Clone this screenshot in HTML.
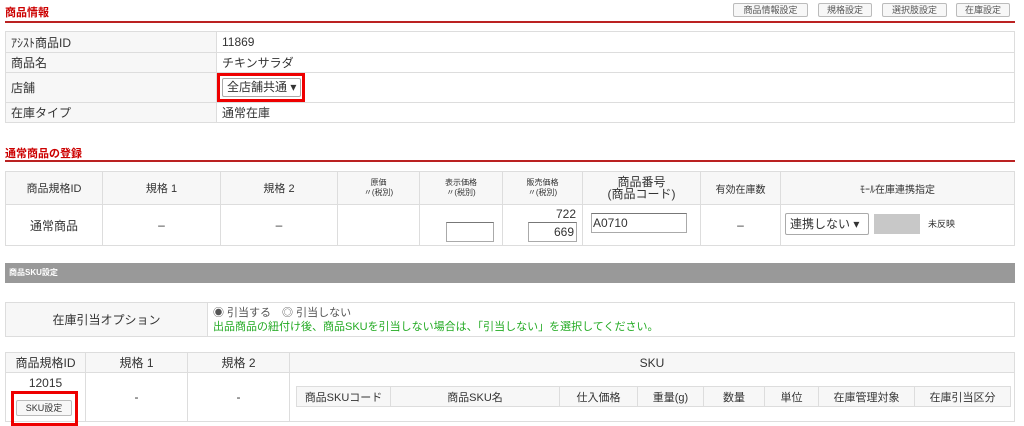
<!DOCTYPE html><html><head><meta charset="utf-8"><style>
*{box-sizing:border-box;margin:0;padding:0}
body{width:1024px;height:426px;background:#fff;font-family:"Liberation Sans","Noto Sans CJK JP",sans-serif;font-size:12px;color:#333;position:relative;overflow:hidden}
.a{position:absolute}
.t{color:#c00;font-weight:bold;font-size:11px}
.rl{position:absolute;left:5px;width:1010px;height:2px;background:#b22}
.btn{position:absolute;top:3px;height:14px;border:1px solid #bbb;border-radius:2px;background:#f7f7f7;font-size:9px;color:#555;text-align:center;line-height:12px}
.c{position:absolute;border:1px solid #ddd;display:flex;align-items:center;justify-content:center;text-align:center}
.l{justify-content:flex-start;padding-left:5px;text-align:left}
.h{background:#f7f7f7}
.s{font-size:8px;line-height:10px}
</style></head><body>
<div class="a t" style="left:5px;top:4px">商品情報</div>
<div class="rl" style="top:21px"></div>
<div class="btn" style="left:733px;width:75px">商品情報設定</div>
<div class="btn" style="left:818px;width:54px">規格設定</div>
<div class="btn" style="left:882px;width:65px">選択肢設定</div>
<div class="btn" style="left:956px;width:54px">在庫設定</div>

<div class="c l h" style="left:5px;top:31px;width:212px;height:22px">ｱｼｽﾄ商品ID</div>
<div class="c l" style="left:216px;top:31px;width:799px;height:22px">11869</div>
<div class="c l h" style="left:5px;top:52px;width:212px;height:21px">商品名</div>
<div class="c l" style="left:216px;top:52px;width:799px;height:21px">チキンサラダ</div>
<div class="c l h" style="left:5px;top:72px;width:212px;height:31px">店舗</div>
<div class="c l" style="left:216px;top:72px;width:799px;height:31px"></div>
<div class="c l h" style="left:5px;top:102px;width:212px;height:21px">在庫タイプ</div>
<div class="c l" style="left:216px;top:102px;width:799px;height:21px">通常在庫</div>
<div class="a" style="left:217px;top:73px;width:88px;height:29px;border:3px solid #e00"></div>
<div class="a" style="left:222px;top:78px;width:79px;height:19px;border:1px solid #aaa;border-radius:2px;font-size:12px;line-height:17px;padding-left:4px">全店舗共通 ▾</div>

<div class="a t" style="left:5px;top:145px">通常商品の登録</div>
<div class="rl" style="top:160px"></div>
<div class="c h" style="left:5px;top:171px;width:98px;height:34px;font-size:11px">商品規格ID</div>
<div class="c h" style="left:102px;top:171px;width:119px;height:34px;font-size:11px">規格 1</div>
<div class="c h" style="left:220px;top:171px;width:118px;height:34px;font-size:11px">規格 2</div>
<div class="c h s" style="left:337px;top:171px;width:83px;height:34px">原価<br>〃(税別)</div>
<div class="c h s" style="left:419px;top:171px;width:84px;height:34px">表示価格<br>〃(税別)</div>
<div class="c h s" style="left:502px;top:171px;width:81px;height:34px">販売価格<br>〃(税別)</div>
<div class="c h" style="left:582px;top:171px;width:119px;height:34px;font-size:12px;line-height:12px">商品番号<br>(商品コード)</div>
<div class="c h" style="left:700px;top:171px;width:81px;height:34px;font-size:10px">有効在庫数</div>
<div class="c h" style="left:780px;top:171px;width:235px;height:34px;font-size:10px">ﾓｰﾙ在庫連携指定</div>
<div class="c" style="left:5px;top:204px;width:98px;height:42px">通常商品</div>
<div class="c" style="left:102px;top:204px;width:119px;height:42px">–</div>
<div class="c" style="left:220px;top:204px;width:118px;height:42px">–</div>
<div class="c" style="left:337px;top:204px;width:83px;height:42px"></div>
<div class="c" style="left:419px;top:204px;width:84px;height:42px"></div>
<div class="c" style="left:502px;top:204px;width:81px;height:42px"></div>
<div class="c" style="left:582px;top:204px;width:119px;height:42px"></div>
<div class="c" style="left:700px;top:204px;width:81px;height:42px">–</div>
<div class="c" style="left:780px;top:204px;width:235px;height:42px"></div>
<div class="a" style="left:446px;top:222px;width:48px;height:20px;border:1px solid #aaa;border-top-color:#777"></div>
<div class="a" style="left:540px;top:207px;width:36px;text-align:right">722</div>
<div class="a" style="left:528px;top:222px;width:49px;height:20px;border:1px solid #aaa;border-top-color:#777;text-align:right;padding-right:2px;line-height:18px">669</div>
<div class="a" style="left:591px;top:213px;width:96px;height:20px;border:1px solid #aaa;border-top-color:#777;padding-left:1px;line-height:18px">A0710</div>
<div class="a" style="left:785px;top:213px;width:84px;height:22px;border:1px solid #aaa;border-radius:2px;line-height:20px;padding-left:4px">連携しない ▾</div>
<div class="a" style="left:874px;top:214px;width:46px;height:20px;background:#c8c8c8"></div>
<div class="a" style="left:928px;top:217px;font-size:9px">未反映</div>

<div class="a" style="left:5px;top:263px;width:1010px;height:20px;background:#999;color:#fff;font-size:8px;font-weight:bold;line-height:20px;padding-left:4px">商品SKU設定</div>

<div class="c h" style="left:5px;top:302px;width:203px;height:35px">在庫引当オプション</div>
<div class="c l" style="left:207px;top:302px;width:808px;height:35px;display:block;padding-top:3px;line-height:13px"><span style="color:#555;font-size:11px">◉ 引当する　◎ 引当しない</span><br><span style="color:#2a2;font-size:11px">出品商品の紐付け後、商品SKUを引当しない場合は、「引当しない」を選択してください。</span></div>

<div class="c h" style="left:5px;top:352px;width:81px;height:21px">商品規格ID</div>
<div class="c h" style="left:85px;top:352px;width:103px;height:21px">規格 1</div>
<div class="c h" style="left:187px;top:352px;width:103px;height:21px">規格 2</div>
<div class="c h" style="left:289px;top:352px;width:726px;height:21px">SKU</div>
<div class="c" style="left:5px;top:372px;width:81px;height:50px"></div>
<div class="a" style="left:5px;top:376px;width:81px;text-align:center">12015</div>
<div class="c" style="left:85px;top:372px;width:103px;height:50px">-</div>
<div class="c" style="left:187px;top:372px;width:103px;height:50px">-</div>
<div class="c" style="left:289px;top:372px;width:726px;height:50px"></div>
<div class="a" style="left:11px;top:391px;width:67px;height:35px;border:3px solid #e00"></div>
<div class="a" style="left:16px;top:400px;width:56px;height:16px;border:1px solid #bbb;border-radius:2px;background:#f7f7f7;font-size:9px;text-align:center;line-height:14px">SKU設定</div>
<div class="c h" style="left:296px;top:386px;width:95px;height:21px;font-size:11px">商品SKUコード</div>
<div class="c h" style="left:390px;top:386px;width:170px;height:21px;font-size:11px">商品SKU名</div>
<div class="c h" style="left:559px;top:386px;width:79px;height:21px;font-size:11px">仕入価格</div>
<div class="c h" style="left:637px;top:386px;width:67px;height:21px;font-size:11px">重量(g)</div>
<div class="c h" style="left:703px;top:386px;width:62px;height:21px;font-size:11px">数量</div>
<div class="c h" style="left:764px;top:386px;width:55px;height:21px;font-size:11px">単位</div>
<div class="c h" style="left:818px;top:386px;width:97px;height:21px;font-size:11px">在庫管理対象</div>
<div class="c h" style="left:914px;top:386px;width:97px;height:21px;font-size:11px">在庫引当区分</div>
</body></html>
